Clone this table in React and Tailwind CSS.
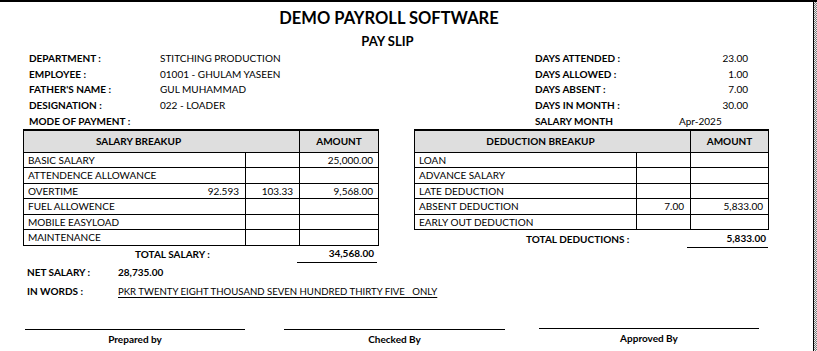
import React from 'react';

const leftInfo = [
  ['DEPARTMENT :', 'STITCHING PRODUCTION'],
  ['EMPLOYEE :', '01001 -  GHULAM YASEEN'],
  ["FATHER'S NAME :", 'GUL MUHAMMAD'],
  ['DESIGNATION :', '022 - LOADER'],
  ['MODE OF PAYMENT :', ''],
];

const rightInfo = [
  ['DAYS ATTENDED :', '23.00'],
  ['DAYS ALLOWED :', '1.00'],
  ['DAYS ABSENT :', '7.00'],
  ['DAYS IN MONTH :', '30.00'],
];

const salaryRows = [
  { label: 'BASIC SALARY', amount: '25,000.00' },
  { label: 'ATTENDENCE ALLOWANCE' },
  { label: 'OVERTIME', rate: '92.593', qty: '103.33', amount: '9,568.00' },
  { label: 'FUEL ALLOWENCE' },
  { label: 'MOBILE EASYLOAD' },
  { label: 'MAINTENANCE' },
];

const deductionRows = [
  { label: 'LOAN' },
  { label: 'ADVANCE SALARY' },
  { label: 'LATE DEDUCTION' },
  { label: 'ABSENT DEDUCTION', qty: '7.00', amount: '5,833.00' },
  { label: 'EARLY OUT DEDUCTION' },
];

function BreakupTable({ title, titleClass, cols, rows }) {
  return (
    <div className={`grid ${cols} border-l border-t-2 border-black`}>
      {/* header */}
      <div className={`col-span-2 h-[22px] flex items-center justify-center bg-[#dedede] border-r border-b border-black font-bold ${titleClass}`}>
        {title}
      </div>
      <div className="h-[22px] flex items-center justify-center bg-[#dedede] border-r border-b border-black font-bold">
        AMOUNT
      </div>
      {rows.map((r) => (
        <React.Fragment key={r.label}>
          <div className="h-[15.5px] flex items-center justify-between pl-[4px] pr-[6px] border-r border-b border-black">
            <span>{r.label}</span>
            <span>{r.rate}</span>
          </div>
          <div className="h-[15.5px] flex items-center justify-end pr-[6px] border-r border-b border-black">
            {r.qty}
          </div>
          <div className="h-[15.5px] flex items-center justify-end pr-[5px] border-r border-b border-black">
            {r.amount}
          </div>
        </React.Fragment>
      ))}
    </div>
  );
}

export default function App() {
  return (
    <div className="flex w-[817px] h-[351px] overflow-hidden bg-white border-t-2 border-black text-black text-[10px] font-[Lato,sans-serif]">
      <div className="w-[814px] flex flex-col border-r border-black">
        {/* Title */}
        <div className="w-[778px] mt-[6px] text-center text-[16.5px] leading-[20px] font-bold">
          DEMO PAYROLL SOFTWARE
        </div>
        <div className="w-[775px] mt-[5px] text-center text-[13px] leading-[16px] font-bold">
          PAY SLIP
        </div>

        {/* Employee info */}
        <div className="flex mt-[1.5px]">
          <div className="w-[535px] pl-[29px]">
            {leftInfo.map(([k, v]) => (
              <div key={k} className="flex items-center h-[15.7px]">
                <span className="w-[131px] font-bold">{k}</span>
                <span>{v}</span>
              </div>
            ))}
          </div>
          <div className="w-[213px]">
            {rightInfo.map(([k, v]) => (
              <div key={k} className="flex items-center justify-between h-[15.7px]">
                <span className="font-bold">{k}</span>
                <span>{v}</span>
              </div>
            ))}
            <div className="flex items-center h-[15.7px]">
              <span className="w-[144px] font-bold">SALARY MONTH</span>
              <span>Apr-2025</span>
            </div>
          </div>
        </div>

        {/* Breakup tables */}
        <div className="flex items-start pl-[23px]">
          <div className="w-[356px]">
            <BreakupTable
              title="SALARY BREAKUP"
              titleClass="pr-[46px]"
              cols="grid-cols-[222px_54px_79px]"
              rows={salaryRows}
            />
            <div className="flex items-center h-[17px]">
              <span className="w-[274px] pl-[112px] font-bold">TOTAL SALARY :</span>
              <span className="w-[80px] h-full flex items-center justify-end pr-[3px] border-b border-black font-bold">
                34,568.00
              </span>
            </div>
          </div>
          <div className="w-[355px] ml-[35px]">
            <BreakupTable
              title="DEDUCTION BREAKUP"
              titleClass="pr-[24px]"
              cols="grid-cols-[222px_54px_78px]"
              rows={deductionRows}
            />
            <div className="flex items-center h-[18px]">
              <span className="w-[273px] pl-[112px] font-bold">TOTAL DEDUCTIONS :</span>
              <span className="w-[81px] h-full flex items-end pb-[1px] justify-end pr-[2px] border-b border-black font-bold">
                5,833.00
              </span>
            </div>
          </div>
        </div>

        {/* Net salary */}
        <div className="flex items-center h-[16px] mt-[2px] pl-[27px]">
          <span className="w-[91px] font-bold">NET SALARY :</span>
          <span className="font-bold">28,735.00</span>
        </div>
        <div className="flex items-center h-[16px] mt-[3px] pl-[27px]">
          <span className="w-[91px] font-bold">IN WORDS :</span>
          <span className="text-[9.6px] underline underline-offset-2">PKR TWENTY EIGHT THOUSAND SEVEN HUNDRED THIRTY FIVE&nbsp;&nbsp; ONLY</span>
        </div>

        {/* Signatures */}
        <div className="flex mt-[29px] pl-[25px]">
          <div className="w-[220px] border-t border-black pt-[2px] text-center font-bold">Prepared by</div>
          <div className="w-[221px] ml-[39px] border-t border-black pt-[2px] text-center font-bold">Checked By</div>
          <div className="w-[220px] ml-[34px] -mt-[1px] border-t border-black pt-[2px] text-center font-bold">Approved By</div>
        </div>
      </div>
      <div className="w-[3px] bg-[repeating-conic-gradient(#777_0_25%,#eee_0_50%)] bg-[length:2px_2px]" />
    </div>
  );
}
